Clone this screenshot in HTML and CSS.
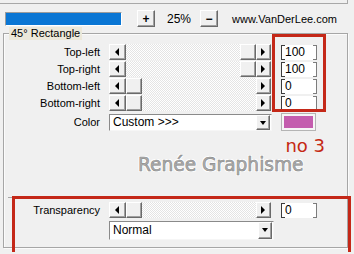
FILE: index.html
```html
<!DOCTYPE html>
<html>
<head>
<meta charset="utf-8">
<link rel="stylesheet" href="styles.css">
</head>
<body>
<div class="topframe"></div>
<div class="toolbar">
  <div class="progress"><div class="progress-fill"></div></div>
  <div class="btn pm plus">+</div>
  <div class="pct">25%</div>
  <div class="btn pm">&minus;</div>
  <div class="url">www.VanDerLee.com</div>
</div>
<div class="group">
  <div class="legend">45° Rectangle</div>
  <div class="rows">
    <div class="row">
      <span class="lbl">Top-left</span>
      <div class="slider"><span class="sbtn left"></span><span class="track max"><span class="thumb"></span></span><span class="sbtn right"></span></div>
      <div class="edit">100</div>
    </div>
    <div class="row">
      <span class="lbl">Top-right</span>
      <div class="slider"><span class="sbtn left"></span><span class="track max"><span class="thumb"></span></span><span class="sbtn right"></span></div>
      <div class="edit">100</div>
    </div>
    <div class="row">
      <span class="lbl">Bottom-left</span>
      <div class="slider"><span class="sbtn left"></span><span class="track"><span class="thumb"></span></span><span class="sbtn right"></span></div>
      <div class="edit">0</div>
    </div>
    <div class="row">
      <span class="lbl">Bottom-right</span>
      <div class="slider"><span class="sbtn left"></span><span class="track"><span class="thumb"></span></span><span class="sbtn right"></span></div>
      <div class="edit">0</div>
    </div>
  </div>
  <div class="row color-row">
    <span class="lbl">Color</span>
    <div class="combo"><span class="combo-text">Custom &gt;&gt;&gt;</span><span class="combo-arrow"></span></div>
    <div class="swatch"></div>
  </div>
  <div class="note">no 3</div>
  <div class="watermark">Renée Graphisme</div>
  <div class="mark mark-values"></div>
  <div class="sub">
    <div class="row">
      <span class="lbl">Transparency</span>
      <div class="slider"><span class="sbtn left"></span><span class="track"><span class="thumb"></span></span><span class="sbtn right"></span></div>
      <div class="edit">0</div>
    </div>
    <div class="row mode-row">
      <span class="lbl"></span>
      <div class="combo wide"><span class="combo-text">Normal</span><span class="combo-arrow"></span></div>
    </div>
    <div class="mark mark-sub"></div>
  </div>
</div>
</body>
</html>
```
FILE: styles.css
```css
* { box-sizing: border-box; }
html, body {
  margin: 0;
  padding: 0;
}
body {
  width: 354px;
  height: 254px;
  overflow: hidden;
  background: #f0f0f0;
  font-family: "Liberation Sans", Arial, sans-serif;
  font-size: 11px;
  color: #000;
}
.topframe {
  width: 348px;
  height: 4px;
  border-bottom: 1px solid #a8a8a8;
  border-right: 1px solid #a8a8a8;
}
.toolbar {
  display: flex;
  align-items: center;
  height: 17px;
  margin-top: 6px;
  padding-left: 5px;
}
.progress {
  width: 117px;
  height: 14px;
  border: 1px solid;
  border-color: #9c9c9c #fff #fff #9c9c9c;
  background: #fff;
}
.progress-fill {
  height: 12px;
  background: #0a76d4;
}
.btn {
  background: #f0f0f0;
  border: 1px solid;
  border-color: #fff #6a6a6a #6a6a6a #fff;
  box-shadow: inset -1px -1px 0 #a0a0a0;
}
.pm {
  width: 18px;
  height: 17px;
  display: flex;
  align-items: center;
  justify-content: center;
  font-weight: bold;
  font-size: 12px;
  line-height: 1;
}
.plus { margin-left: 15px; }
.pct {
  width: 45px;
  padding-left: 12px;
  font-size: 12px;
}
.url {
  margin-left: 14px;
  font-size: 11px;
}
.group {
  position: relative;
  margin: 6px 0 0 3px;
  width: 345px;
  height: 215px;
  border: 1px solid #a6a6a6;
  box-shadow: inset 1px 1px 0 #fbfbfb, 1px 1px 0 #fbfbfb;
}
.legend {
  width: max-content;
  height: 13px;
  line-height: 13px;
  margin: -7px 0 0 5px;
  padding: 0 2px;
  background: #ece8da;
}
.rows { margin-top: 4px; }
.row {
  display: flex;
  align-items: center;
  height: 16px;
  margin-bottom: 1px;
}
.lbl {
  width: 96px;
  margin-right: 9px;
  text-align: right;
  white-space: nowrap;
}
.slider {
  display: flex;
  width: 162px;
  height: 16px;
}
.sbtn, .thumb {
  position: relative;
  height: 16px;
  background: #f0f0f0;
  border: 1px solid;
  border-color: #fff #6a6a6a #6a6a6a #fff;
  box-shadow: inset -1px -1px 0 #a0a0a0;
}
.sbtn.left { width: 17px; }
.sbtn.right { width: 15px; }
.thumb { width: 16px; display: block; }
.sbtn::after {
  content: "";
  position: absolute;
  top: 3px;
  border-top: 4px solid transparent;
  border-bottom: 4px solid transparent;
}
.sbtn.left::after {
  left: 5px;
  border-right: 4px solid #000;
}
.sbtn.right::after {
  left: 4px;
  border-left: 4px solid #000;
}
.track {
  flex: 1;
  display: flex;
  background-color: #f6f6f6;
  background-image: repeating-conic-gradient(#ffffff 0 25%, #e4e4e4 0 50%);
  background-size: 2px 2px;
}
.track.max { justify-content: flex-end; }
.edit {
  margin-left: 10px;
  width: 36px;
  height: 15px;
  line-height: 14px;
  padding-left: 3px;
  font-size: 12px;
  background:
    linear-gradient(#3c3c3c, #3c3c3c) left top / 3px 1px no-repeat,
    linear-gradient(#3c3c3c, #3c3c3c) left bottom / 3px 1px no-repeat,
    linear-gradient(#7c7c7c, #7c7c7c) right top / 3px 1px no-repeat,
    linear-gradient(#7c7c7c, #7c7c7c) right bottom / 3px 1px no-repeat,
    #fff;
  border-left: 1px solid #3c3c3c;
  border-right: 1px solid #7c7c7c;
}
.color-row {
  height: 18px;
  margin-top: 2px;
}
.combo {
  display: flex;
  width: 163px;
  height: 17px;
  background: #fff;
  border: 1px solid;
  border-color: #8a8a8a #f6f6f6 #f6f6f6 #8a8a8a;
}
.combo.wide {
  width: 165px;
  height: 19px;
}
.combo-text {
  flex: 1;
  padding-left: 3px;
  line-height: 15px;
  font-size: 12px;
}
.combo.wide .combo-text { line-height: 17px; }
.combo-arrow {
  position: relative;
  width: 14px;
  margin: 0 1px 0 0;
  background: #f0f0f0;
  border: 1px solid;
  border-color: #fff #6a6a6a #6a6a6a #fff;
  box-shadow: inset -1px -1px 0 #a0a0a0;
}
.combo-arrow::after {
  content: "";
  position: absolute;
  left: 3px;
  top: 5px;
  border-left: 3.5px solid transparent;
  border-right: 3.5px solid transparent;
  border-top: 4px solid #000;
}
.swatch {
  margin-left: 9px;
  width: 35px;
  height: 18px;
  background: #c45dae;
  border: 1px solid #b4b4b4;
  box-shadow: inset 0 0 0 2px #f6f6f6;
}
.note {
  margin-top: 5px;
  padding-right: 22px;
  text-align: right;
  font-family: "DejaVu Sans", Verdana, sans-serif;
  font-size: 18px;
  line-height: 20px;
  color: #c52812;
}
.watermark {
  position: absolute;
  left: 134px;
  top: 121px;
  font-family: "DejaVu Sans", Verdana, sans-serif;
  font-size: 18.6px;
  line-height: 20px;
  color: #aeaeae;
  -webkit-text-stroke: 0.6px #8a8a8a;
  text-shadow: 1px 1px 0 #fff, -1px -1px 0 #fff, 1px -1px 0 #fff, -1px 1px 0 #fff;
}
.mark {
  position: absolute;
  border: 3px solid #c42818;
}
.mark-values {
  left: 268px;
  top: 0;
  width: 54px;
  height: 78px;
}
.sub {
  position: relative;
  margin: 41px 4px 0 4px;
  border-top: 1px solid #a6a6a6;
  padding-top: 4px;
}
.sub .lbl { width: 92px; }
.mode-row {
  height: 19px;
  margin-top: 3px;
}
.mark-sub {
  left: 4px;
  top: -2px;
  width: 339px;
  height: 56px;
  border-bottom: none;
}
```
